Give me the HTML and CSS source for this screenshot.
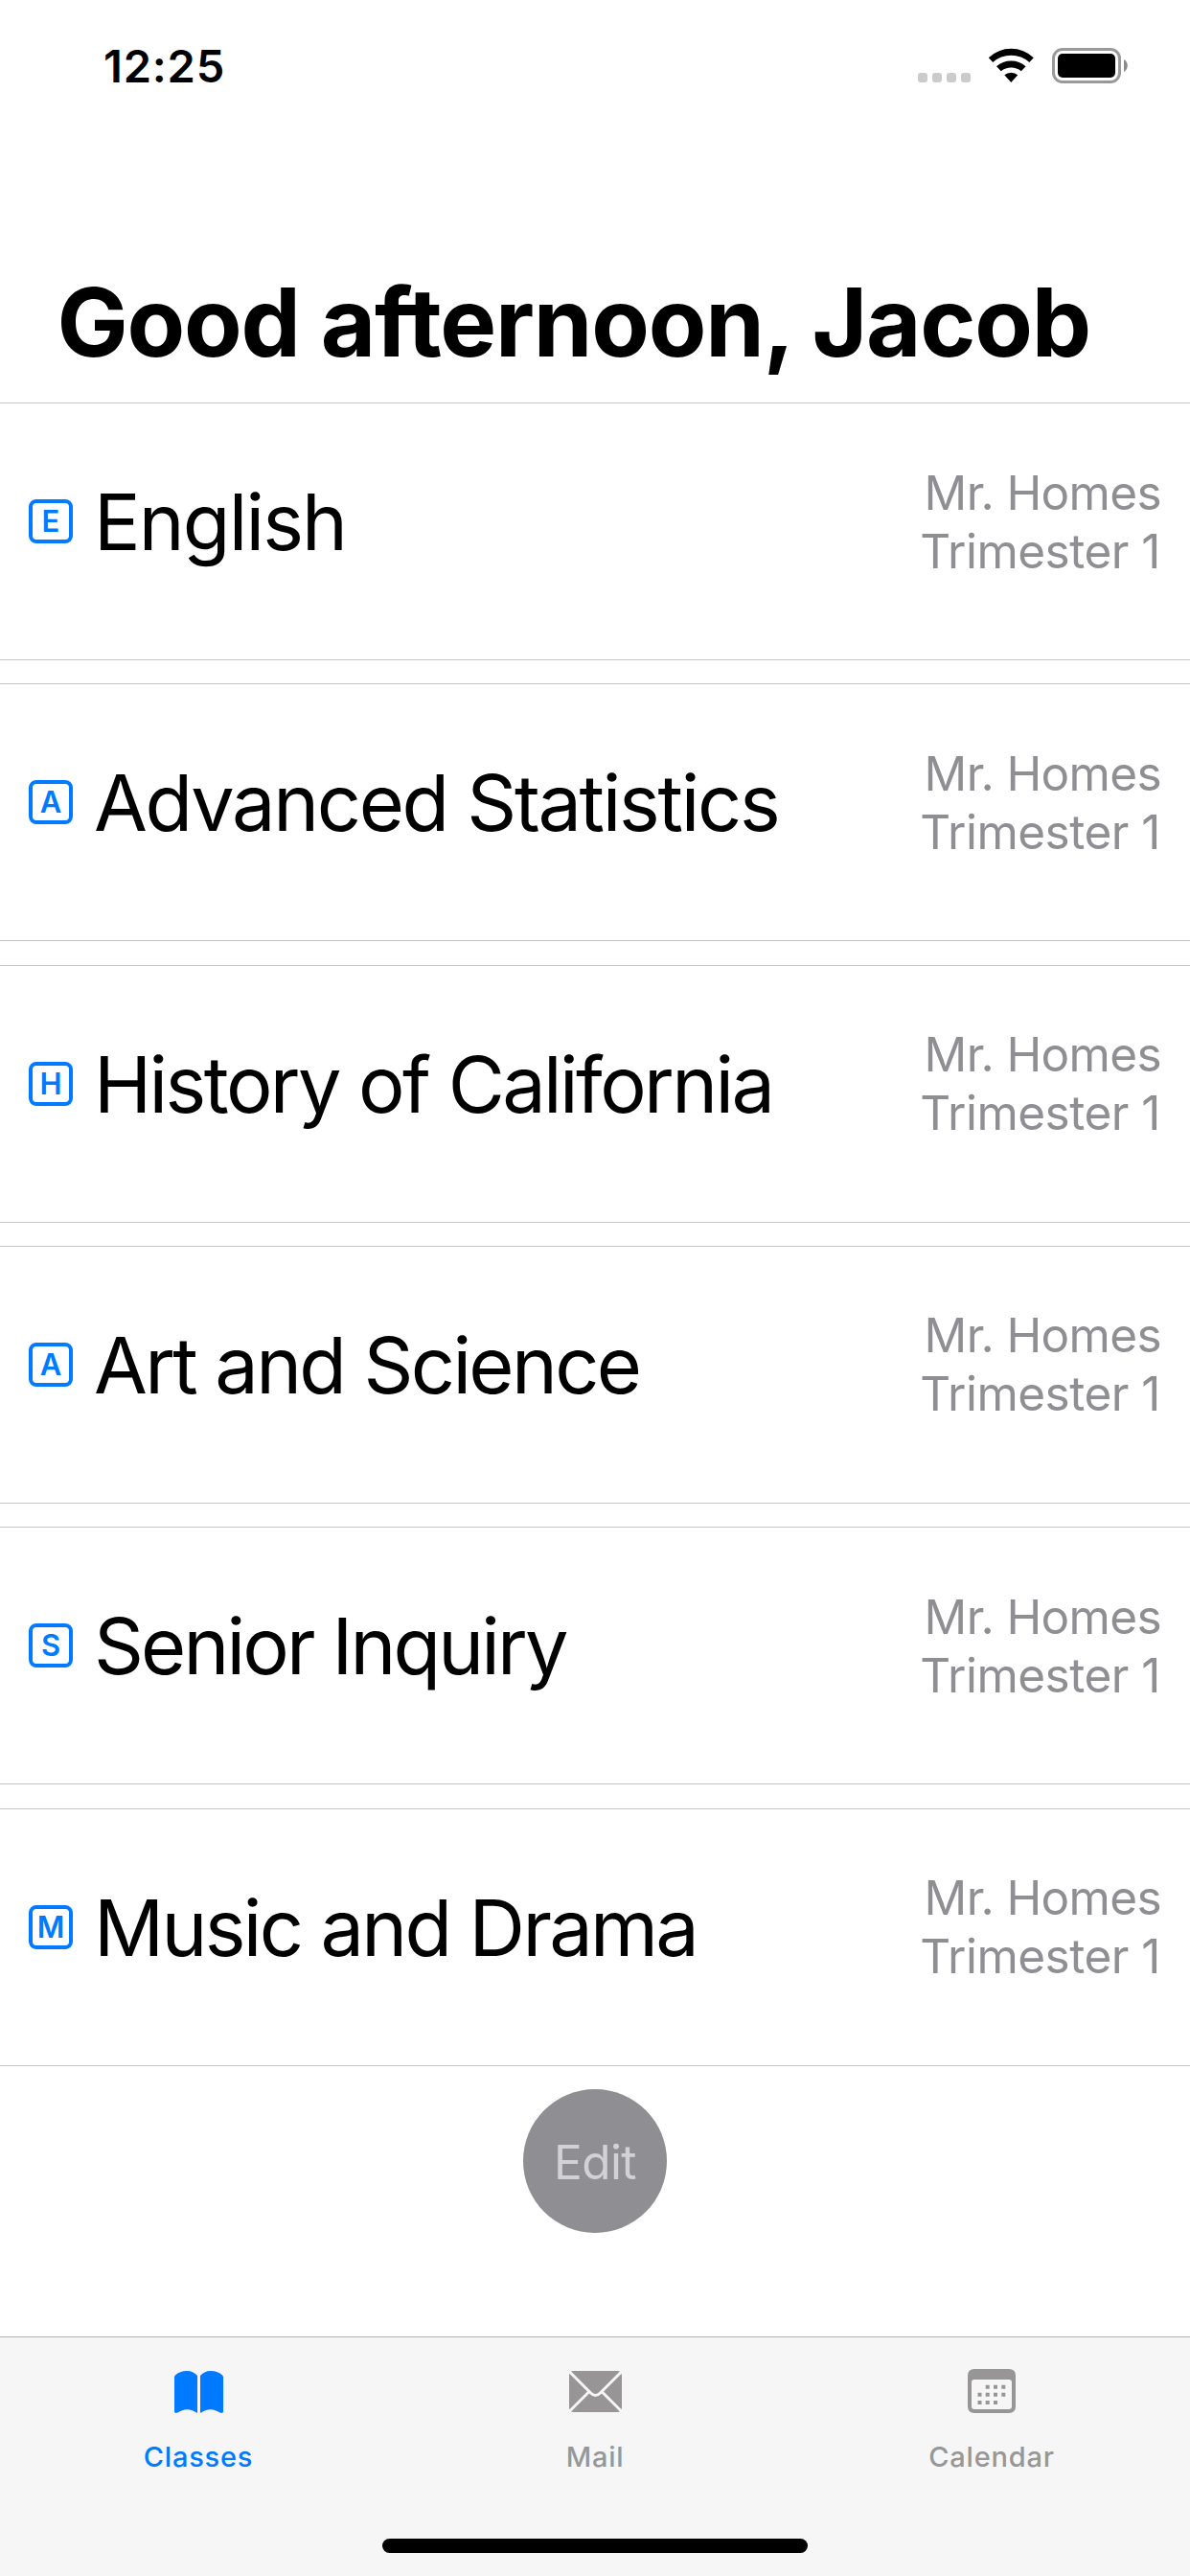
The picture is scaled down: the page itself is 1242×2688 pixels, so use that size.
FILE: index.html
```html
<!DOCTYPE html>
<html lang="en">
<head>
<meta charset="utf-8">
<title>Classes</title>
<link rel="stylesheet" href="styles.css">
</head>
<body>
<div class="screen">
  <header class="status">
    <span class="time">12:25</span>
    <div class="indicators">
      <svg class="signal" width="55" height="37" viewBox="0 0 55 37" fill="#cbcbcb">
        <rect x="0" y="26" width="10" height="10" rx="3"/>
        <rect x="15" y="26" width="10" height="10" rx="3"/>
        <rect x="30" y="26" width="10" height="10" rx="3"/>
        <rect x="45" y="26" width="10" height="10" rx="3"/>
      </svg>
      <svg class="wifi" width="48" height="37" viewBox="0 0 48 37">
        <path d="M.8 10.3A34 34 0 0 1 47.8 10.3L43.3 15A28.5 28.5 0 0 0 5.3 15Z"/>
        <path d="M9 19.3A23 23 0 0 1 39.6 19.3L34.8 24.2A16.5 16.5 0 0 0 13.8 24.2Z"/>
        <path d="M17.3 28.2A11 11 0 0 1 31.3 28.2L24.3 36Z"/>
      </svg>
      <svg class="battery" width="79" height="37" viewBox="0 0 79 37">
        <rect x="1.5" y="1.5" width="69" height="34" rx="9.5" fill="none" stroke="#999" stroke-width="3"/>
        <rect x="6" y="6" width="60" height="25" rx="5"/>
        <path d="M75 12C80 14.5 80 22.500 75 25Z" fill="#8a8a8a"/>
      </svg>
    </div>
  </header>

  <h1 class="greeting">Good afternoon, Jacob</h1>

  <main class="list">
    <section class="row">
      <span class="badge">E</span><span class="name english">English</span>
      <div class="meta"><span class="teacher">Mr. Homes</span><span class="term">Trimester 1</span></div>
    </section>
    <section class="row">
      <span class="badge">A</span><span class="name statistics">Advanced Statistics</span>
      <div class="meta"><span class="teacher">Mr. Homes</span><span class="term">Trimester 1</span></div>
    </section>
    <section class="row">
      <span class="badge">H</span><span class="name history">History of California</span>
      <div class="meta"><span class="teacher">Mr. Homes</span><span class="term">Trimester 1</span></div>
    </section>
    <section class="row">
      <span class="badge">A</span><span class="name art">Art and Science</span>
      <div class="meta"><span class="teacher">Mr. Homes</span><span class="term">Trimester 1</span></div>
    </section>
    <section class="row">
      <span class="badge">S</span><span class="name inquiry">Senior Inquiry</span>
      <div class="meta"><span class="teacher">Mr. Homes</span><span class="term">Trimester 1</span></div>
    </section>
    <section class="row">
      <span class="badge">M</span><span class="name music">Music and Drama</span>
      <div class="meta"><span class="teacher">Mr. Homes</span><span class="term">Trimester 1</span></div>
    </section>
    <button class="edit" type="button">Edit</button>
  </main>

  <footer class="footer">
    <nav class="tabs">
      <div class="tab active">
        <svg width="51" height="46" viewBox="0 0 51 46" fill="currentColor">
          <path d="M0 8.500Q0 7.400.9 6.500C4 3.500 8 2 13 2C18 2 21.500 4 24 7V46C20.500 43.500 17 42.200 13.500 42.200C9.500 42.200 6.500 43.500 3.500 45.500Q0 46.800 0 44Z"/>
          <path d="M51 8.500Q51 7.400 50.100 6.500C47 3.500 43 2 38 2C33 2 29.500 4 27 7V46C30.500 43.500 34 42.200 37.500 42.200C41.500 42.200 44.500 43.500 47.500 45.500Q51 46.800 51 44Z"/>
        </svg>
        <span class="label">Classes</span>
      </div>
      <div class="tab">
        <svg width="55" height="46" viewBox="0 0 55 46">
          <rect y="2" width="55" height="43" rx="4.500" fill="#979596"/>
          <path d="M0 2.500L22.500 25Q27.500 30 32.500 25L55 2.500M0 44.500L20.500 24M55 44.500L34.500 24" fill="none" stroke="#f6f6f6" stroke-width="3"/>
        </svg>
        <span class="label">Mail</span>
      </div>
      <div class="tab">
        <svg width="50" height="46" viewBox="0 0 50 46" fill="#979596">
          <path fill-rule="evenodd" d="M7 0H43Q50 0 50 7V39Q50 46 43 46H7Q0 46 0 39V7Q0 0 7 0ZM7 11Q4 11 4 14V39Q4 42 7 42H43Q46 42 46 39V14Q46 11 43 11Z"/>
          <path d="M18.700 16.700h4v4h-4zM27 16.700h4v4h-4zM35.300 16.700h4v4h-4zM10.500 24.700h4v4h-4zM18.700 24.700h4v4h-4zM27 24.700h4v4h-4zM35.300 24.700h4v4h-4zM10.500 33h4v4h-4zM18.700 33h4v4h-4zM27 33h4v4h-4z"/>
        </svg>
        <span class="label">Calendar</span>
      </div>
    </nav>
    <div class="home-indicator"></div>
  </footer>
</div>
</body>
</html>
```
FILE: styles.css
```css
* { box-sizing: border-box; }

body {
  margin: 0;
  background: #fff;
  color: #000;
  font-family: Inter, "Liberation Sans", sans-serif;
}

.screen {
  width: 1242px;
  height: 2688px;
  display: flex;
  flex-direction: column;
}

.status {
  height: 136px;
  padding: 0 65px 0 108px;
  display: flex;
  align-items: center;
  justify-content: space-between;
}

.time {
  font-size: 47px;
  font-weight: 600;
  letter-spacing: 0.8px;
}

.indicators {
  display: flex;
  align-items: center;
}

.indicators svg { display: block; }
.wifi { margin: 0 19px 0 18px; }

.greeting {
  margin: 0;
  padding: 140px 0 24px 59.5px;
  font-size: 99px;
  font-weight: 700;
  line-height: 120px;
  letter-spacing: -1.25px;
  white-space: nowrap;
}

.list {
  display: flex;
  flex-direction: column;
  align-items: center;
  gap: 24.333px;
}

.row {
  width: 100%;
  height: 269px;
  padding: 0 30px 21px 30px;
  border-top: 1px solid #c6c6c8;
  border-bottom: 1px solid #c6c6c8;
  display: flex;
  align-items: center;
}

.badge {
  width: 46px;
  height: 46px;
  border: 4px solid #007aff;
  border-radius: 8px;
  color: #007aff;
  font-size: 31px;
  font-weight: 600;
  line-height: 38px;
  text-align: center;
}

.name {
  flex: 1;
  margin-left: 22px;
  padding-top: 2px;
  font-size: 81px;
  line-height: 100px;
  white-space: nowrap;
}

.english { letter-spacing: -1.85px; }
.statistics { letter-spacing: -2.33px; }
.history { letter-spacing: -2.6px; }
.art { letter-spacing: -2.65px; }
.inquiry { letter-spacing: -2.85px; }
.music { letter-spacing: -2.66px; }

.meta {
  padding-top: 1px;
  display: flex;
  flex-direction: column;
  align-items: flex-end;
  color: #8e8e93;
  font-size: 49.5px;
  line-height: 61px;
  letter-spacing: -0.5px;
}

.teacher { letter-spacing: -0.65px; }
.term { margin-right: 1px; }

.edit {
  width: 150px;
  height: 150px;
  padding: 2px 0 0;
  border: 0;
  border-radius: 50%;
  background: #8e8e93;
  color: #d1d1d6;
  font-family: inherit;
  font-size: 49.5px;
  letter-spacing: -0.6px;
}

.footer {
  height: 250px;
  margin-top: auto;
  padding: 33px 0 24px;
  border-top: 1px solid #b2b2b2;
  background: #f6f6f6;
  display: flex;
  flex-direction: column;
  align-items: center;
  justify-content: space-between;
}

.tabs {
  width: 100%;
  display: grid;
  grid-template-columns: repeat(3, 1fr);
}

.tab {
  display: flex;
  flex-direction: column;
  align-items: center;
  gap: 28px;
  color: #979797;
}

.tab svg { display: block; }
.active { color: #007aff; }

.label {
  font-size: 29px;
  font-weight: 500;
  line-height: 36px;
  letter-spacing: 0.8px;
}

.home-indicator {
  width: 444px;
  height: 15px;
  border-radius: 8px;
  background: #000;
}
```
